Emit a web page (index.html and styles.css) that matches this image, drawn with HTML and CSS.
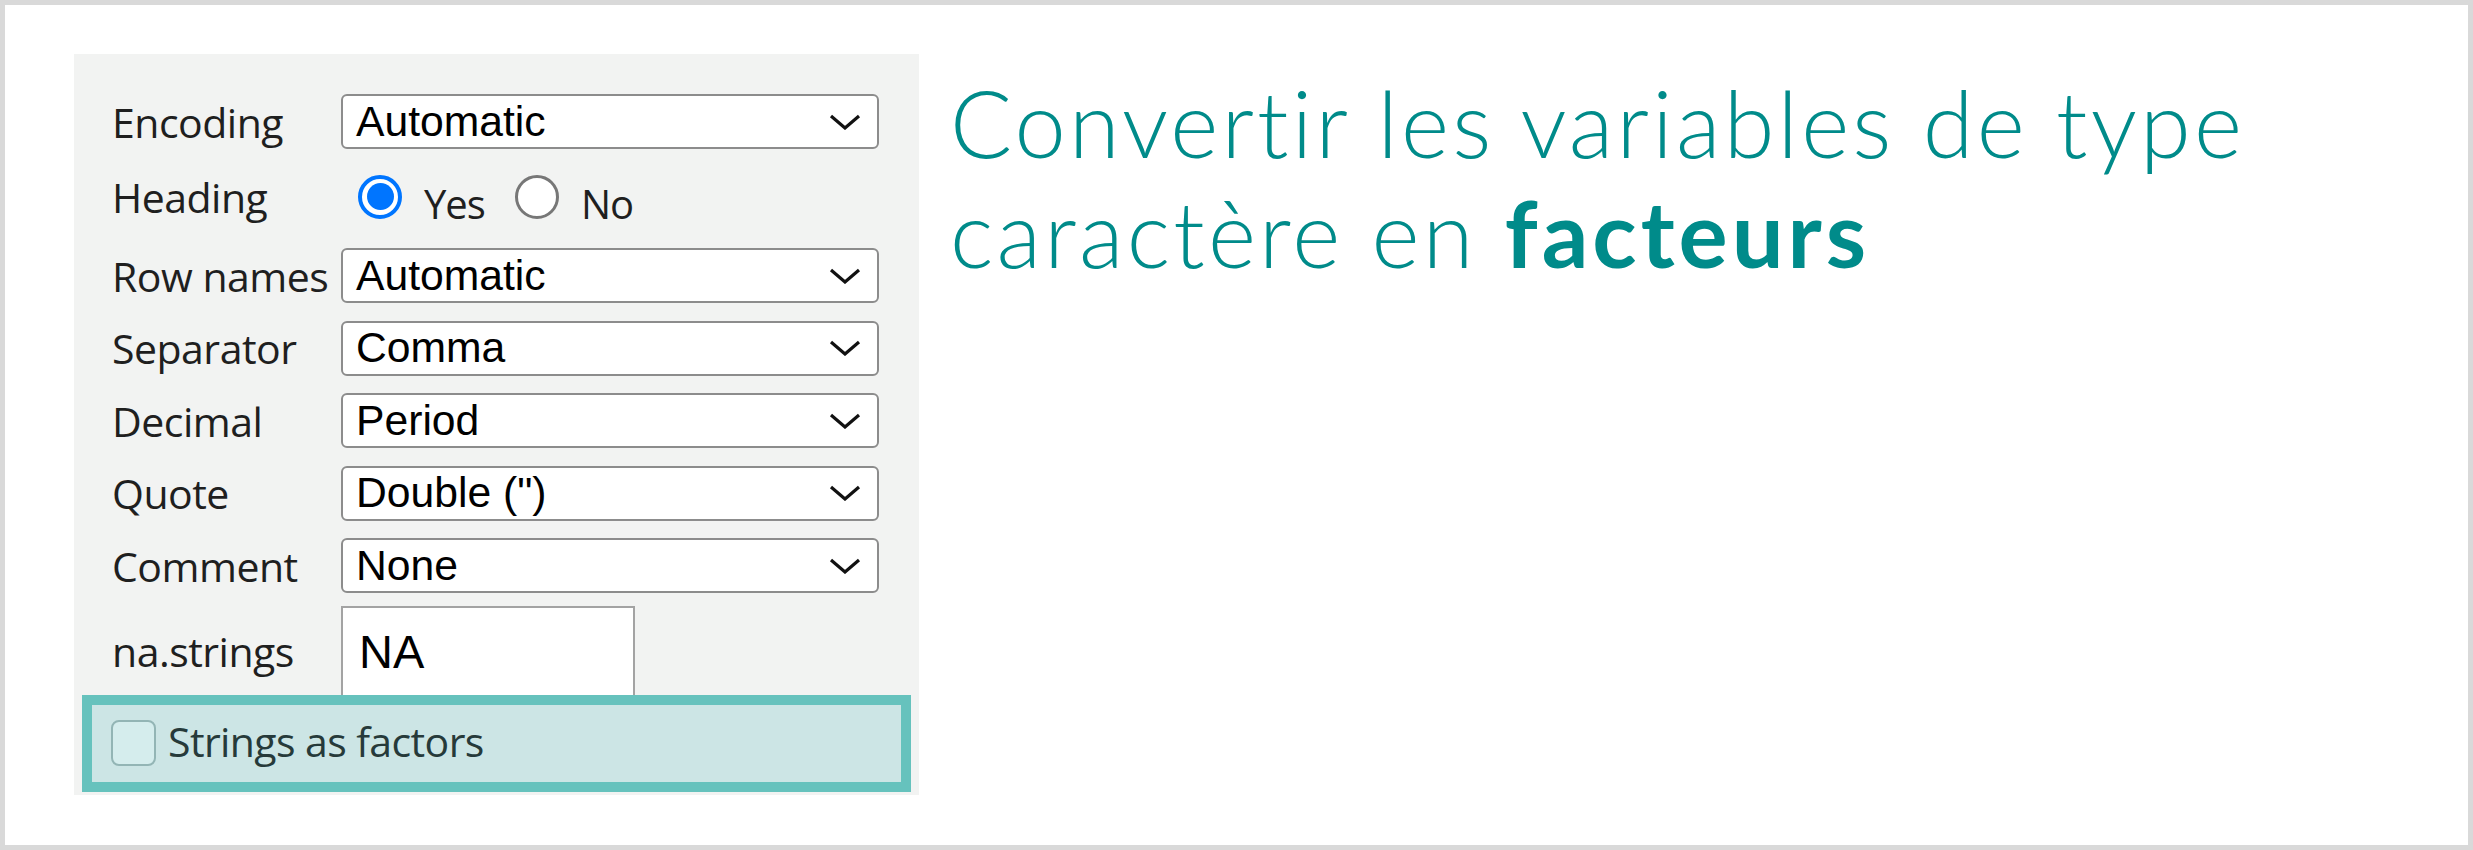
FILE: index.html
```html
<!DOCTYPE html>
<html lang="fr">
<head>
<meta charset="utf-8">
<title>Strings as factors</title>
<link rel="stylesheet" href="styles.css">
</head>
<body>
<div class="frame">
  <div class="panel">
    <div class="row">
      <div class="label">Encoding</div>
      <div class="select"><span class="value">Automatic</span><svg class="chev" viewBox="0 0 32 16"><path d="M2 2 L16 14 L30 2" /></svg></div>
    </div>
    <div class="row row-heading">
      <div class="label label-heading">Heading</div>
      <div class="radios">
        <span class="radio checked"><span class="dot"></span></span>
        <span class="radio-text">Yes</span>
        <span class="radio"></span>
        <span class="radio-text">No</span>
      </div>
    </div>
    <div class="row">
      <div class="label">Row names</div>
      <div class="select"><span class="value">Automatic</span><svg class="chev" viewBox="0 0 32 16"><path d="M2 2 L16 14 L30 2" /></svg></div>
    </div>
    <div class="row">
      <div class="label">Separator</div>
      <div class="select"><span class="value">Comma</span><svg class="chev" viewBox="0 0 32 16"><path d="M2 2 L16 14 L30 2" /></svg></div>
    </div>
    <div class="row">
      <div class="label">Decimal</div>
      <div class="select"><span class="value">Period</span><svg class="chev" viewBox="0 0 32 16"><path d="M2 2 L16 14 L30 2" /></svg></div>
    </div>
    <div class="row">
      <div class="label">Quote</div>
      <div class="select"><span class="value">Double (")</span><svg class="chev" viewBox="0 0 32 16"><path d="M2 2 L16 14 L30 2" /></svg></div>
    </div>
    <div class="row">
      <div class="label">Comment</div>
      <div class="select"><span class="value">None</span><svg class="chev" viewBox="0 0 32 16"><path d="M2 2 L16 14 L30 2" /></svg></div>
    </div>
    <div class="row row-na">
      <div class="label label-na">na.strings</div>
      <div class="textinput">NA</div>
    </div>
    <div class="highlight">
      <span class="checkbox"></span>
      <span class="check-text">Strings as factors</span>
    </div>
  </div>
  <h1 class="title">Convertir les variables de type<br>caractère en <strong>facteurs</strong></h1>
</div>
</body>
</html>
```
FILE: styles.css
```css
* { box-sizing: border-box; }
html, body { margin: 0; padding: 0; background: #ffffff; }

.frame {
  width: 2473px;
  height: 850px;
  border: 5px solid #d9d9d9;
  background: #ffffff;
  padding: 49px 0 0 69px;
  display: flex;
  align-items: flex-start;
}

.panel {
  width: 845px;
  height: 741px;
  background: #f2f3f2;
  padding: 40px 40px 4px 38px;
  display: flex;
  flex-direction: column;
  gap: 17.5px;
  font-family: "Open Sans", "Noto Sans", sans-serif;
  color: #1f1f1f;
}

.row {
  display: flex;
  align-items: center;
  height: 55px;
  flex: none;
}

.label {
  width: 229px;
  flex: none;
  font-size: 41px;
  letter-spacing: -0.5px;
  line-height: 56px;
  white-space: nowrap;
}

.select {
  flex: 1;
  height: 55px;
  background: #ffffff;
  border: 2px solid #8c8c8c;
  border-radius: 6px;
  display: flex;
  align-items: center;
  justify-content: space-between;
  padding: 0 16px 0 13px;
  font-family: "Liberation Sans", Arial, sans-serif;
  font-size: 42.67px;
  color: #000000;
}

.value { white-space: nowrap; line-height: 48px; margin-top: -2px; }

.chev {
  width: 32px;
  height: 16px;
  fill: none;
  stroke: #111111;
  stroke-width: 3.2;
}

.row-heading {
  height: 64px;
  align-items: flex-start;
}
.label-heading { margin-top: 2px; }

.radios {
  display: flex;
  align-items: flex-start;
}

.radio {
  width: 44px;
  height: 44px;
  border-radius: 50%;
  border: 3px solid #777777;
  background: #ffffff;
  margin-top: 8px;
  display: flex;
  align-items: center;
  justify-content: center;
  flex: none;
}
.radio:first-child { margin-left: 17px; }
.radio.checked { border: 4px solid #0075ff; }
.dot {
  width: 27px;
  height: 27px;
  border-radius: 50%;
  background: #0075ff;
}

.radio-text {
  font-size: 40px;
  letter-spacing: -1px;
  line-height: 56px;
  margin-top: 9px;
  margin-left: 22px;
  margin-right: 30px;
}

.row-na {
  height: 89px;
  margin-top: -5px;
  align-items: flex-start;
}
.label-na { margin-top: 17px; }

.textinput {
  width: 294px;
  height: 89px;
  background: #ffffff;
  border: 2px solid #a3a3a3;
  border-bottom: none;
  font-family: "Liberation Sans", Arial, sans-serif;
  font-size: 47px;
  line-height: 53px;
  padding: 17px 0 0 16px;
  color: #000000;
}

.highlight {
  margin: -17.5px -32px 0 -30px;
  height: 97px;
  flex: none;
  border: 10px solid #66c2bd;
  background: #cce5e5;
  display: flex;
  align-items: center;
  padding-left: 19px;
  padding-bottom: 4px;
}

.checkbox {
  width: 45px;
  height: 46px;
  border: 2px solid #93b5b5;
  border-radius: 8px;
  background: #d5eded;
  flex: none;
  margin-top: 4px;
}

.check-text {
  margin-left: 12px;
  font-size: 41px;
  letter-spacing: -0.6px;
  line-height: 56px;
  color: #263a3a;
  white-space: nowrap;
}

.title {
  margin: 14px 0 0 31px;
  font-family: "Lato", "Open Sans", sans-serif;
  font-weight: 300;
  font-size: 92px;
  letter-spacing: 3.2px;
  line-height: 110px;
  color: #008b8a;
  white-space: nowrap;
}
.title strong { font-weight: 700; letter-spacing: 4px; }
```
